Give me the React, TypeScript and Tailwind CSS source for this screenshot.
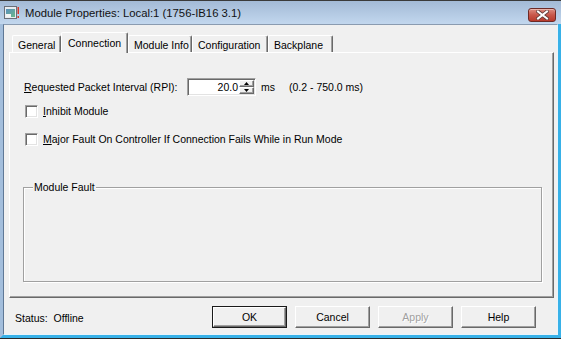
import React from "react";

const sunken =
  "border border-t-[#a0a0a0] border-l-[#a0a0a0] border-b-white border-r-white shadow-[inset_1px_1px_0_#696969,inset_-1px_-1px_0_#e3e3e3]";
const raised =
  "border border-t-white border-l-white border-b-[#696969] border-r-[#696969] shadow-[inset_-1px_-1px_0_#a0a0a0]";

function TitleIcon() {
  return (
    <svg width="16" height="14" viewBox="0 0 16 14">
      <rect x="0.5" y="0.5" width="12" height="12" fill="#e8ecf0" stroke="#6a6f78" />
      <defs>
        <linearGradient id="pane" x1="0" y1="0" x2="1" y2="1">
          <stop offset="0" stopColor="#5a8fbc" />
          <stop offset="1" stopColor="#6cb88a" />
        </linearGradient>
      </defs>
      <rect x="2" y="3" width="9" height="8" fill="url(#pane)" />
      <rect x="2" y="8" width="5" height="3" fill="#f4f4f4" />
      <rect x="13.5" y="1" width="1.5" height="7" fill="#d83a2a" />
      <rect x="13.5" y="10" width="1.5" height="2" fill="#d83a2a" />
    </svg>
  );
}

function CloseButton() {
  return (
    <div className="w-[28px] h-[14px] mt-[5px] self-start rounded-[3px] border border-[#6d2a26] bg-linear-to-b from-[#dc8b80] via-[#c8574a] to-[#b83a2c] flex items-center justify-center shadow-[inset_0_1px_0_#eab3aa]">
      <svg width="13" height="10" viewBox="0 0 13 10">
        <path d="M2 1.5 L11 8.5 M11 1.5 L2 8.5" stroke="#5e3b38" strokeWidth="3.6" strokeLinecap="square" />
        <path d="M2 1.5 L11 8.5 M11 1.5 L2 8.5" stroke="#ffffff" strokeWidth="2" strokeLinecap="square" />
      </svg>
    </div>
  );
}

function Tab({ label, width, selected }: { label: string; width: number; selected?: boolean }) {
  if (selected) {
    return (
      <div
        className="relative top-[1px] z-10 h-[21px] whitespace-nowrap border-t border-l border-r border-t-white border-l-white border-r-[#696969] rounded-t-[2px] bg-[#f0f0f0] shadow-[inset_-1px_0_0_#a0a0a0] flex items-start pt-[5px] pl-[6px]"
        style={{ width }}
      >
        {label}
      </div>
    );
  }
  return (
    <div
      className="h-[17px] whitespace-nowrap border-t border-l border-r border-t-white border-l-white border-r-[#696969] rounded-t-[2px] shadow-[inset_-1px_0_0_#a0a0a0] flex items-start pt-[4px] pl-[5px]"
      style={{ width }}
    >
      {label}
    </div>
  );
}

function CheckBox({ children }: { children: React.ReactNode }) {
  return (
    <div className="flex items-center ml-[15px] h-[13px]">
      <div className={`w-[13px] h-[13px] bg-white ${sunken}`} />
      <span className="ml-[5px] whitespace-nowrap">{children}</span>
    </div>
  );
}

function Button({ label, isDefault, disabled }: { label: string; isDefault?: boolean; disabled?: boolean }) {
  const inner = (
    <div
      className={`flex-1 flex items-center justify-center bg-[#f0f0f0] ${raised} ${
        disabled ? "text-[#a0a0a0] [text-shadow:1px_1px_0_#ffffff]" : ""
      }`}
    >
      {label}
    </div>
  );
  return (
    <div className={`w-[75px] h-[22px] flex ${isDefault ? "border border-[#1a1a1a]" : ""}`}>{inner}</div>
  );
}

export default function App() {
  return (
    <div className="w-[561px] h-[339px] flex flex-col overflow-hidden border-b border-[#2a2a2a] bg-[#3ab2e8] font-['Liberation_Sans',Arial,sans-serif] text-[10.5px] leading-none text-black">
      {/* title bar */}
      <div className="h-[24px] flex items-center border-t border-[#3a3a3a] bg-linear-to-b from-[#a3bad6] to-[#c2d7ee] pl-[4px] pr-[5px]">
        <TitleIcon />
        <span className="ml-[5px] pt-[3px] text-[11.3px] text-[#111]">Module Properties: Local:1 (1756-IB16 3.1)</span>
        <div className="ml-auto">
          <CloseButton />
        </div>
      </div>

      <div className="flex-1 flex flex-col border-l-[3px] border-r-[3px] border-b-[3px] border-l-[#a3bedc] border-r-[#37b1e8] border-b-[#37b1e8]">
        <div className="flex-1 flex flex-col bg-[#f0f0f0] border border-t-[#8a9bb0] border-l-[#5f7896] border-r-[#e8f4fb] border-b-[#e8f4fb] pt-[7px] pl-[5px] pr-[3px]">
          {/* tabs */}
          <div className="h-[20px] flex items-end pl-[3px]">
            <Tab label="General" width={49} />
            <Tab label="Connection" width={67} selected />
            <Tab label="Module Info" width={64} />
            <Tab label="Configuration" width={76} />
            <Tab label="Backplane" width={65} />
          </div>

          {/* panel */}
          <div className="h-[246px] flex flex-col bg-[#f0f0f0] border border-t-white border-l-white border-b-[#696969] border-r-[#696969] shadow-[inset_-1px_-1px_0_#a0a0a0] pt-[25px]">
            <div className="flex items-center h-[18px] ml-[14px]">
              <span className="w-[163px] whitespace-nowrap">
                <span className="underline">R</span>equested Packet Interval (RPI):
              </span>
              <div className={`w-[69px] h-[18px] bg-white flex items-stretch ${sunken} p-[1px]`}>
                <span className="flex-1 flex items-center justify-end pr-[1px] pt-[1px]">20.0</span>
                <div className="w-[15px] flex flex-col">
                  <div className={`flex-1 flex items-center justify-center bg-[#f0f0f0] ${raised}`}>
                    <svg width="5" height="3" viewBox="0 0 5 3">
                      <path d="M0 3 L2.5 0 L5 3 Z" fill="#000" />
                    </svg>
                  </div>
                  <div className={`flex-1 flex items-center justify-center bg-[#f0f0f0] ${raised}`}>
                    <svg width="5" height="3" viewBox="0 0 5 3">
                      <path d="M0 0 L2.5 3 L5 0 Z" fill="#000" />
                    </svg>
                  </div>
                </div>
              </div>
              <span className="ml-[5px]">ms</span>
              <span className="ml-[14px]">(0.2 - 750.0 ms)</span>
            </div>

            <div className="mt-[9px]">
              <CheckBox>
                <span className="underline">I</span>nhibit Module
              </CheckBox>
            </div>
            <div className="mt-[15px]">
              <CheckBox>
                <span className="underline">M</span>ajor Fault On Controller If Connection Fails While in Run Mode
              </CheckBox>
            </div>

            {/* group box */}
            <div className="relative flex-1 mt-[41px] ml-[13px] mr-[11px] mb-[15px] border border-[#a0a0a0] shadow-[inset_1px_1px_0_#ffffff,1px_1px_0_#ffffff]">
              <span className="absolute -top-[6px] left-[9px] px-[1px] bg-[#f0f0f0]">Module Fault</span>
            </div>
          </div>

          {/* bottom row */}
          <div className="mt-[8px] h-[22px] flex items-center">
            <span className="ml-[6px] pt-[3px]">Status:&nbsp; Offline</span>
            <div className="ml-auto mr-[18px] flex gap-[8px]">
              <Button label="OK" isDefault />
              <Button label="Cancel" />
              <Button label="Apply" disabled />
              <Button label="Help" />
            </div>
          </div>
        </div>
      </div>
    </div>
  );
}
